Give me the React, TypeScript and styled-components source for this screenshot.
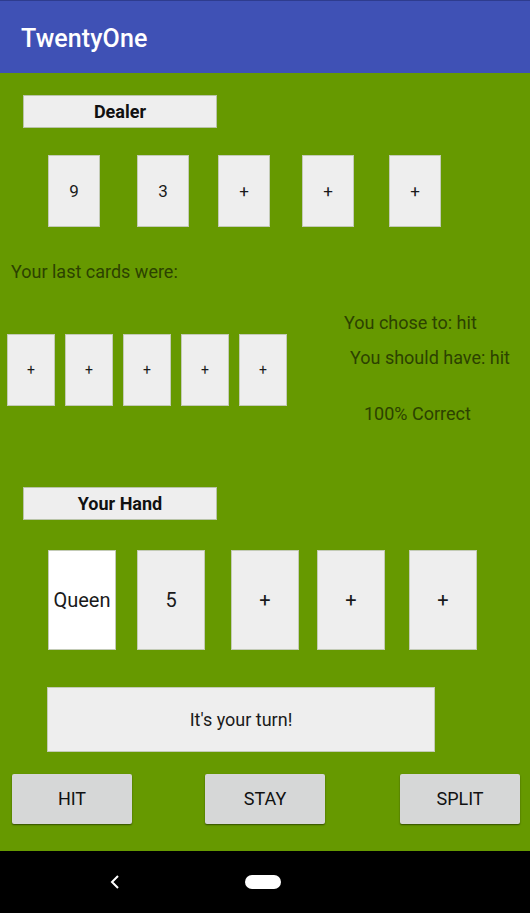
import React from "react";
import styled, { createGlobalStyle } from "styled-components";

const Global = createGlobalStyle`
  html, body { margin: 0; padding: 0; background: #000; }
  body { font-family: Roboto, "Noto Sans", sans-serif; }
  * { box-sizing: border-box; }
`;

const Screen = styled.div`
  width: 530px;
  height: 913px;
  display: flex;
  flex-direction: column;
  overflow: hidden;
`;

const AppBar = styled.header`
  height: 73px;
  flex: none;
  background: #3f51b5;
  border-top: 1px solid #2e3c8e;
  display: flex;
  align-items: center;
  padding-left: 21px;
  padding-top: 2px;
  color: #fff;
  font-size: 25px;
  font-weight: 500;
  letter-spacing: 0.1px;
`;

const Main = styled.main`
  height: 778px;
  flex: none;
  background: #669900;
  display: flex;
  flex-direction: column;
`;

const SectionLabel = styled.div<{ $top: number }>`
  margin: ${(p) => p.$top}px 0 0 23px;
  width: 194px;
  height: 33px;
  background: #eeeeee;
  border: 1px solid #b9c4a8;
  display: flex;
  align-items: center;
  justify-content: center;
  font-size: 18px;
  font-weight: 700;
  color: #111;
`;

const CardRow = styled.div<{ $top: number }>`
  margin-top: ${(p) => p.$top}px;
  display: flex;
  align-items: flex-start;
`;

const Card = styled.div<{ $w: number; $h: number; $left: number; $size: number; $white?: boolean }>`
  width: ${(p) => p.$w}px;
  height: ${(p) => p.$h}px;
  margin-left: ${(p) => p.$left}px;
  flex: none;
  background: ${(p) => (p.$white ? "#ffffff" : "#eeeeee")};
  border: 1px solid #c3cbb6;
  display: flex;
  align-items: center;
  justify-content: center;
  font-size: ${(p) => p.$size}px;
  color: #1a1a1a;
`;

const InfoText = styled.div<{ $top: number; $left?: number }>`
  margin: ${(p) => p.$top}px 0 0 ${(p) => p.$left ?? 0}px;
  font-size: 18px;
  line-height: 20px;
  height: 20px;
  color: #2c4200;
  white-space: nowrap;
`;

const MiddleRow = styled.div`
  margin-top: 31px;
  display: flex;
  align-items: flex-start;
`;

const LastCards = styled.div`
  margin-top: 21px;
  display: flex;
`;

const InfoColumn = styled.div`
  display: flex;
  flex-direction: column;
`;

const Message = styled.div`
  margin: 37px 0 0 47px;
  width: 388px;
  height: 65px;
  background: #eeeeee;
  border: 1px solid #c3cbb6;
  display: flex;
  align-items: center;
  justify-content: center;
  font-size: 18px;
  color: #1a1a1a;
`;

const ButtonRow = styled.div`
  margin-top: 22px;
  display: flex;
`;

const ActionButton = styled.button<{ $left: number }>`
  margin-left: ${(p) => p.$left}px;
  width: 120px;
  height: 50px;
  flex: none;
  background: #d6d7d7;
  border: none;
  border-radius: 2px;
  box-shadow: 0 1px 2px rgba(0, 0, 0, 0.35), 0 1px 1px rgba(0, 0, 0, 0.2);
  font-family: Roboto, "Noto Sans", sans-serif;
  font-size: 18px;
  color: #111;
  text-transform: uppercase;
  padding: 0 0 2px;
`;

const NavBar = styled.nav`
  flex: 1;
  background: #000;
  display: flex;
  align-items: center;
  padding-left: 109px;
`;

const HomePill = styled.div`
  margin-left: 124px;
  width: 36px;
  height: 14px;
  border-radius: 7px;
  background: #fff;
`;

const dealer = [
  { v: "9", l: 48 },
  { v: "3", l: 37 },
  { v: "+", l: 29 },
  { v: "+", l: 32 },
  { v: "+", l: 35 },
];

const hand = [
  { v: "Queen", l: 48, white: true },
  { v: "5", l: 21 },
  { v: "+", l: 26 },
  { v: "+", l: 18 },
  { v: "+", l: 24 },
];

export default function App() {
  return (
    <Screen>
      <Global />
      <AppBar>TwentyOne</AppBar>
      <Main>
        <SectionLabel $top={22}>Dealer</SectionLabel>
        <CardRow $top={27}>
          {dealer.map((c, i) => (
            <Card key={i} $w={52} $h={72} $left={c.l} $size={17}>
              {c.v}
            </Card>
          ))}
        </CardRow>
        <InfoText $top={35} $left={11}>Your last cards were:</InfoText>
        <MiddleRow>
          <LastCards>
            {[7, 10, 10, 10, 10].map((l, i) => (
              <Card key={i} $w={48} $h={72} $left={l} $size={14}>
                +
              </Card>
            ))}
          </LastCards>
          <InfoColumn>
            <InfoText $top={0} $left={57}>You chose to: hit</InfoText>
            <InfoText $top={15} $left={63}>You should have: hit</InfoText>
            <InfoText $top={36} $left={77}>100% Correct</InfoText>
          </InfoColumn>
        </MiddleRow>
        <SectionLabel $top={63}>Your Hand</SectionLabel>
        <CardRow $top={30}>
          {hand.map((c, i) => (
            <Card key={i} $w={68} $h={100} $left={c.l} $size={20} $white={c.white}>
              {c.v}
            </Card>
          ))}
        </CardRow>
        <Message>It's your turn!</Message>
        <ButtonRow>
          <ActionButton $left={12}>Hit</ActionButton>
          <ActionButton $left={73}>Stay</ActionButton>
          <ActionButton $left={75}>Split</ActionButton>
        </ButtonRow>
      </Main>
      <NavBar>
        <svg width="12" height="16" viewBox="0 0 12 16">
          <path d="M9 2 L3 8 L9 14" fill="none" stroke="#fff" strokeWidth="2" />
        </svg>
        <HomePill />
      </NavBar>
    </Screen>
  );
}
